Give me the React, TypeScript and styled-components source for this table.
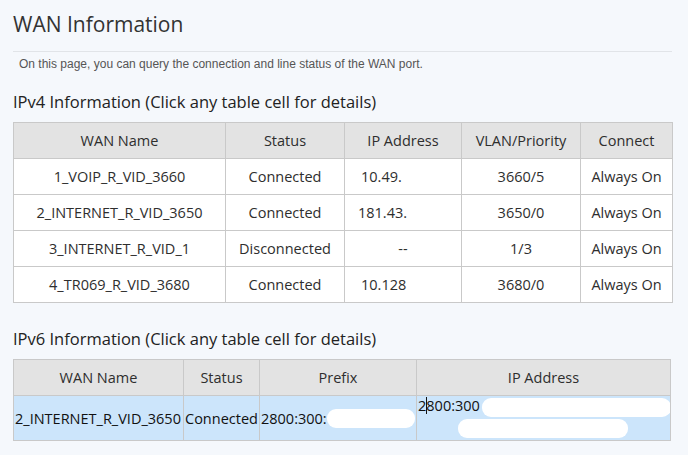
import React from "react";
import styled, { createGlobalStyle } from "styled-components";

const Global = createGlobalStyle`
  html, body { margin: 0; padding: 0; background: #f5f8fc; }
  body { font-family: "Open Sans", "Noto Sans", sans-serif; color: #333; }
`;

const Page = styled.div`
  padding: 10px 16px 0 13px;
  width: 659px;
`;

const Title = styled.h1`
  margin: 0;
  font-family: "Open Sans", sans-serif;
  font-weight: 400;
  font-size: 21px;
  line-height: 28px;
  color: #333;
  padding-bottom: 13px;
  border-bottom: 1px solid #e1e4e8;
`;

const Desc = styled.p`
  margin: 5px 0 0 6px;
  font-family: "Liberation Sans", Arial, sans-serif;
  font-size: 12px;
  line-height: 14px;
  color: #555;
`;

const SectionTitle = styled.h2<{ $top: number }>`
  margin: ${(p) => p.$top}px 0 0 0;
  font-family: "Open Sans", sans-serif;
  font-weight: 400;
  font-size: 16.5px;
  line-height: 22px;
  color: #222;
`;

const Table = styled.table<{ $top: number; $width: number }>`
  margin-top: ${(p) => p.$top}px;
  width: ${(p) => p.$width}px;
  border-collapse: collapse;
  table-layout: fixed;
  font-family: "Open Sans", sans-serif;
  font-size: 14.5px;
  color: #2e2e2e;
`;

const Th = styled.th`
  height: 35px;
  padding: 0;
  background: #e3e3e3;
  border: 1px solid #c9c9c9;
  font-weight: 400;
  text-align: center;
  color: #2e2e2e;
`;

const Td = styled.td<{ $align?: string; $pad?: number }>`
  height: 35px;
  padding: 0 0 0 ${(p) => p.$pad ?? 0}px;
  background: #fff;
  border: 1px solid #c9c9c9;
  text-align: ${(p) => p.$align ?? "center"};
  white-space: nowrap;
  overflow: hidden;
`;

const SelTd = styled.td<{ $valign?: string }>`
  height: 44px;
  padding: 0 0 0 1px;
  background: #cce5fb;
  border: 1px solid #c9c9c9;
  text-align: left;
  vertical-align: ${(p) => p.$valign ?? "middle"};
  white-space: nowrap;
  overflow: hidden;
  color: #111;
  position: relative;
`;

const Blur = styled.span<{ $x: number; $y: number; $w: number; $h: number }>`
  position: absolute;
  left: ${(p) => p.$x}px;
  top: ${(p) => p.$y}px;
  width: ${(p) => p.$w}px;
  height: ${(p) => p.$h}px;
  background: #fff;
  border-radius: 9px;
`;

const Caret = styled.span`
  display: inline-block;
  width: 1px;
  height: 17px;
  background: #111;
  vertical-align: -3px;
  margin: 0 -1px 0 0;
`;

const v4 = [
  ["1_VOIP_R_VID_3660", "Connected", "10.49.", "3660/5"],
  ["2_INTERNET_R_VID_3650", "Connected", "181.43.", "3650/0"],
  ["3_INTERNET_R_VID_1", "Disconnected", "--", "1/3"],
  ["4_TR069_R_VID_3680", "Connected", "10.128", "3680/0"],
];

export default function App() {
  return (
    <Page>
      <Global />
      <Title>WAN Information</Title>
      <Desc>On this page, you can query the connection and line status of the WAN port.</Desc>
      <SectionTitle $top={20}>IPv4 Information (Click any table cell for details)</SectionTitle>
      <Table $top={9} $width={659}>
        <colgroup>
          <col style={{ width: 212 }} />
          <col style={{ width: 119 }} />
          <col style={{ width: 117 }} />
          <col style={{ width: 119 }} />
          <col style={{ width: 92 }} />
        </colgroup>
        <thead>
          <tr>
            <Th>WAN Name</Th>
            <Th>Status</Th>
            <Th>IP Address</Th>
            <Th>VLAN/Priority</Th>
            <Th>Connect</Th>
          </tr>
        </thead>
        <tbody>
          {v4.map((r) => (
            <tr key={r[0]}>
              <Td>{r[0]}</Td>
              <Td>{r[1]}</Td>
              {r[2] === "--" ? (
                <Td>--</Td>
              ) : (
                <Td $align="left" $pad={r[2] === "181.43." ? 13 : 16}>
                  {r[2]}
                </Td>
              )}
              <Td>{r[3]}</Td>
              <Td>Always On</Td>
            </tr>
          ))}
        </tbody>
      </Table>
      <SectionTitle $top={25}>IPv6 Information (Click any table cell for details)</SectionTitle>
      <Table $top={9} $width={657}>
        <colgroup>
          <col style={{ width: 170 }} />
          <col style={{ width: 76 }} />
          <col style={{ width: 157 }} />
          <col style={{ width: 254 }} />
        </colgroup>
        <thead>
          <tr>
            <Th>WAN Name</Th>
            <Th>Status</Th>
            <Th>Prefix</Th>
            <Th>IP Address</Th>
          </tr>
        </thead>
        <tbody>
          <tr>
            <SelTd>2_INTERNET_R_VID_3650</SelTd>
            <SelTd>Connected</SelTd>
            <SelTd>
              2800:300:
              <Blur $x={67} $y={13} $w={88} $h={19} />
            </SelTd>
            <SelTd $valign="top">
              2<Caret />800:300
              <Blur $x={65} $y={2} $w={189} $h={19} />
              <Blur $x={41} $y={23} $w={170} $h={19} />
            </SelTd>
          </tr>
        </tbody>
      </Table>
    </Page>
  );
}
